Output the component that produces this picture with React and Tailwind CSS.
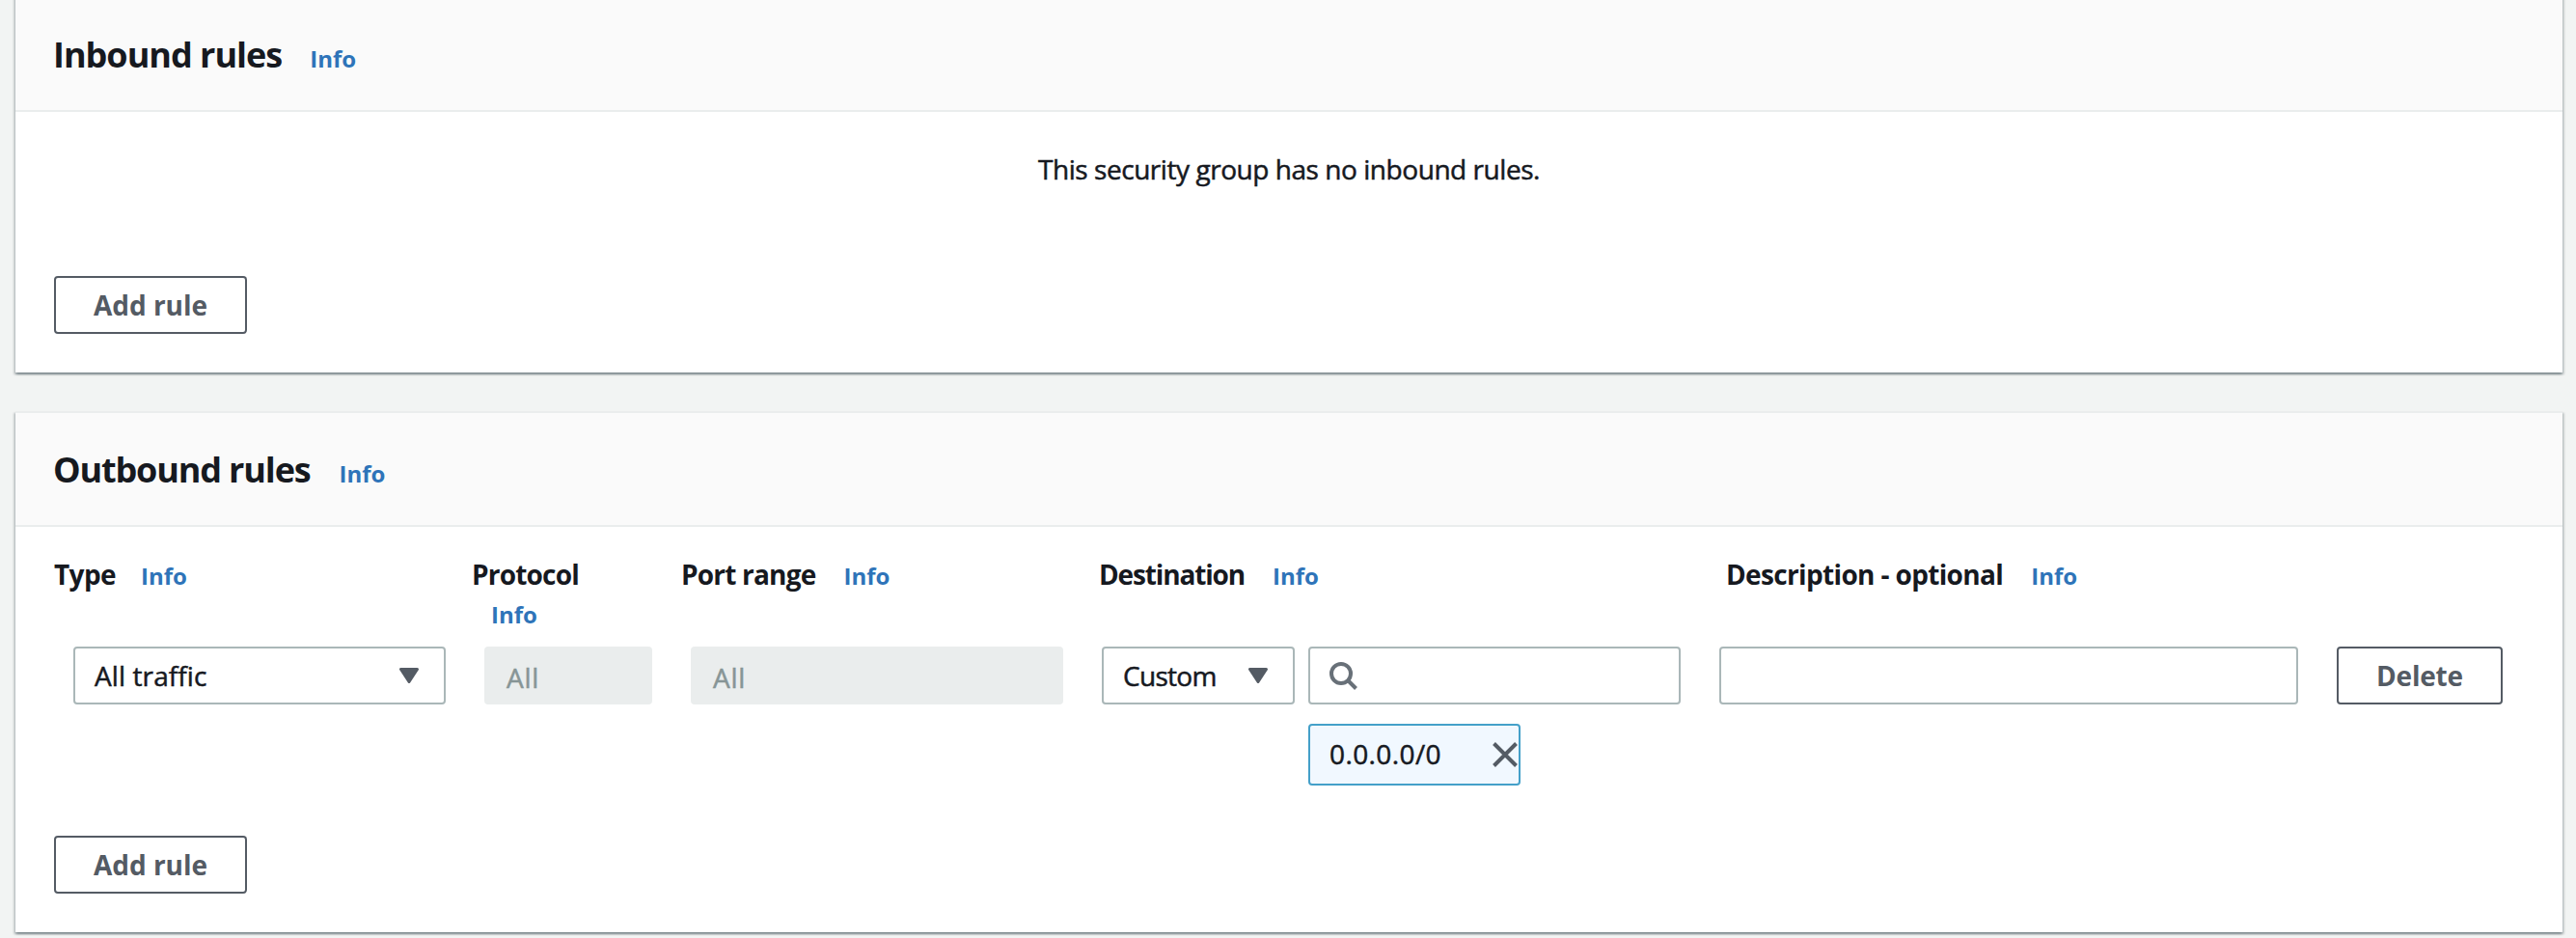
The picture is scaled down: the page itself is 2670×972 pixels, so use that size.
const BASE_TEXT = 'text-[28px] leading-[40px] whitespace-nowrap';
const BODY_TEXT = `${BASE_TEXT} text-[#16191f] [-webkit-text-stroke:0.5px_currentColor]`;

function InfoLink({ className = '' }) {
  return (
    <a href="#info" className={`text-[24px] font-bold text-[#2e74b9] whitespace-nowrap ${className}`}>
      Info
    </a>
  );
}

function Button({ children, className = '' }) {
  return (
    <button
      className={`flex h-[60px] items-center justify-center rounded-[4px] border-2 border-[#545b64] bg-white text-[28px] font-bold text-[#545b64] ${className}`}
    >
      {children}
    </button>
  );
}

function Caret() {
  return (
    <svg width="20" height="16" viewBox="0 0 20 16" className="shrink-0">
      <path d="M1.5 1.5h17L10 14.5z" fill="#545b64" stroke="#545b64" strokeWidth="3" strokeLinejoin="round" />
    </svg>
  );
}

function Select({ value, className = '', textClass = '' }) {
  return (
    <div
      className={`flex h-[60px] items-center justify-between rounded-[4px] border-2 border-[#aab7b8] bg-white pl-5 pr-[26px] ${className}`}
    >
      <span className={`${BODY_TEXT} -mt-px ${textClass}`}>{value}</span>
      <Caret />
    </div>
  );
}

function DisabledField({ value, className = '' }) {
  return (
    <div className={`flex h-[60px] items-center rounded-[4px] bg-[#eaeded] pt-[3px] pl-[23px] ${className}`}>
      <span className="text-[28px] leading-[40px] tracking-[0.8px] text-[#879596] [-webkit-text-stroke:0.5px_currentColor]">
        {value}
      </span>
    </div>
  );
}

function Panel({ title, titleClass, infoClass, className = '', children }) {
  return (
    <section
      className={`mx-4 border-t-2 border-[#eaeded] bg-white shadow-[0_2px_2px_0_rgba(0,28,36,0.3),2px_2px_2px_0_rgba(0,28,36,0.15),-2px_2px_2px_0_rgba(0,28,36,0.15)] ${className}`}
    >
      <header className="flex h-[118px] items-baseline border-b-2 border-[#eaeded] bg-[#fafafa] pt-[37px] pl-[39px]">
        <h2 className={`text-[36px] leading-[44px] font-bold whitespace-nowrap text-[#16191f] ${titleClass}`}>{title}</h2>
        <InfoLink className={infoClass} />
      </header>
      {children}
    </section>
  );
}

function ColumnLabel({ children, width, tracking, infoClass, stacked = false }) {
  return (
    <div className={`shrink-0 ${width} ${stacked ? 'flex flex-col' : 'flex items-baseline'}`}>
      <span className={`${BASE_TEXT} font-bold text-[#16191f] ${tracking}`}>{children}</span>
      <InfoLink className={`leading-[40px] ${infoClass}`} />
    </div>
  );
}

export default function App() {
  return (
    <main className="h-[972px] overflow-hidden bg-[#f2f4f3] font-['Open_Sans','Noto_Sans',sans-serif]">
      <div className="-mt-1 w-[2672px]">
        <Panel title="Inbound rules" titleClass="tracking-[-1px]" infoClass="ml-[29px]">
          <div className="px-10 pt-[39px] pb-10">
            <p className={`${BODY_TEXT} text-center tracking-[-0.45px]`}>This security group has no inbound rules.</p>
            <Button className="mt-[91px] w-[200px]">Add rule</Button>
          </div>
        </Panel>

        <Panel title="Outbound rules" titleClass="tracking-[-1.15px]" infoClass="ml-[30px]" className="mt-10">
          <div className="px-10 pt-[29px] pb-10">
            <div className="flex h-20">
              <ColumnLabel width="w-[433px]" tracking="tracking-[-0.6px]" infoClass="ml-[26px]">
                Type
              </ColumnLabel>
              <ColumnLabel width="w-[217px]" tracking="tracking-[-0.8px]" infoClass="ml-5 pt-0.5" stacked>
                Protocol
              </ColumnLabel>
              <ColumnLabel width="w-[433px]" tracking="tracking-[-0.8px]" infoClass="ml-[29px]">
                Port range
              </ColumnLabel>
              <ColumnLabel width="w-[650px]" tracking="tracking-[-1.15px]" infoClass="ml-[29px]">
                Destination
              </ColumnLabel>
              <ColumnLabel width="w-[600px]" tracking="tracking-[-0.65px]" infoClass="ml-[29px]">
                Description - optional
              </ColumnLabel>
            </div>

            <div className="mt-[15px] ml-5 flex items-start gap-10">
              <Select value="All traffic" className="w-[386px]" textClass="tracking-[0.1px]" />
              <DisabledField value="All" className="w-[174px]" />
              <DisabledField value="All" className="w-[386px]" />
              <div className="flex items-start gap-[14px]">
                <Select value="Custom" className="w-[200px]" textClass="tracking-[-0.7px]" />
                <div className="w-[386px]">
                  <div className="flex h-[60px] items-center rounded-[4px] border-2 border-[#aab7b8] bg-white pl-5">
                    <svg width="30" height="30" viewBox="0 0 30 30" fill="none" stroke="#687078" strokeWidth="4">
                      <circle cx="12" cy="13" r="10" />
                      <path d="M19 20l8.5 8.5" />
                    </svg>
                  </div>
                  <div className="mt-5 flex h-16 w-[220px] items-center justify-between rounded-[4px] border-2 border-[#44a0c9] bg-[#f1f8ff] pl-5">
                    <span className={`${BODY_TEXT} -mt-[3px] tracking-[0.4px]`}>0.0.0.0/0</span>
                    <svg width="28" height="28" viewBox="0 0 28 28" fill="none" stroke="#545b64" strokeWidth="4">
                      <path d="M2.5 2.5l23 23M25.5 2.5l-23 23" />
                    </svg>
                  </div>
                </div>
              </div>
              <div className="h-[60px] w-[600px] rounded-[4px] border-2 border-[#aab7b8] bg-white" />
              <Button className="w-[172px] tracking-[-0.2px]">Delete</Button>
            </div>

            <Button className="mt-[52px] w-[200px]">Add rule</Button>
          </div>
        </Panel>
      </div>
    </main>
  );
}
